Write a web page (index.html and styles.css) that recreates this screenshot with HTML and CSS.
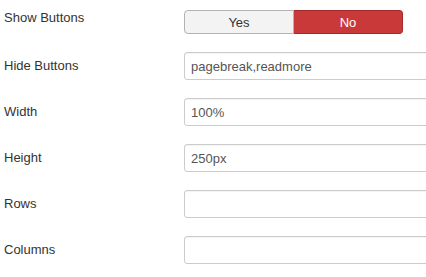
FILE: index.html
```html
<!DOCTYPE html>
<html lang="en">
<head>
    <meta charset="UTF-8">
    <meta name="viewport" content="width=device-width, initial-scale=1.0">
    <title>Editor options</title>
    <link rel="stylesheet" href="styles.css">
</head>
<body>
<form class="options">
    <!-- toggle row -->
    <div class="control-group">
        <label class="control-label control-label-toggle">Show Buttons</label>
        <div class="controls">
            <div class="btn-group">
                <button type="button" class="btn">Yes</button>
                <button type="button" class="btn btn-danger">No</button>
            </div>
        </div>
    </div>
    <div class="control-group">
        <label class="control-label" for="hideButtons">Hide Buttons</label>
        <div class="controls">
            <input type="text" id="hideButtons" value="pagebreak,readmore">
        </div>
    </div>
    <div class="control-group">
        <label class="control-label" for="width">Width</label>
        <div class="controls">
            <input type="text" id="width" value="100%">
        </div>
    </div>
    <div class="control-group">
        <label class="control-label" for="height">Height</label>
        <div class="controls">
            <input type="text" id="height" value="250px">
        </div>
    </div>
    <div class="control-group">
        <label class="control-label" for="rows">Rows</label>
        <div class="controls">
            <input type="text" id="rows" value="">
        </div>
    </div>
    <div class="control-group">
        <label class="control-label" for="cols">Columns</label>
        <div class="controls">
            <input type="text" id="cols" value="">
        </div>
    </div>
</form>
</body>
</html>
```

FILE: styles.css
```css
body {
    font-family: "Liberation Sans", Arial, sans-serif;
    font-size: 13px;
    color: #333;
    background-color: #fff;
    margin: 0;
    padding: 0;
    overflow: hidden;
}

.options {
    padding: 10px 0 0 4px;
}

.control-group {
    display: flex;
    align-items: flex-start;
    margin-bottom: 18px;
}

.control-label {
    width: 180px;
    flex-shrink: 0;
    padding-top: 5px;
    line-height: 18px;
}

/* label sits a little higher next to the toggle */
.control-label-toggle {
    padding-top: 0;
    line-height: 16px;
}

.controls {
    flex: 1;
}

.btn-group {
    display: flex;
    width: 219px;
}

.btn {
    flex: 1;
    height: 24px;
    font-family: inherit;
    font-size: 13px;
    color: #333;
    background-color: #f3f3f3;
    border: 1px solid #b3b3b3;
    border-radius: 4px 0 0 4px;
    padding: 0;
    cursor: pointer;
}

.btn-danger {
    color: #fff;
    background-color: #c9393a;
    border-color: #a52b2b;
    border-radius: 0 4px 4px 0;
    border-left: none;
}

input[type="text"] {
    box-sizing: border-box;
    width: 260px;
    height: 28px;
    padding: 4px 6px;
    font-family: inherit;
    font-size: 13px;
    color: #555;
    border: 1px solid #ccc;
    border-radius: 3px;
    box-shadow: inset 0 1px 1px rgba(0, 0, 0, 0.05);
}
```
